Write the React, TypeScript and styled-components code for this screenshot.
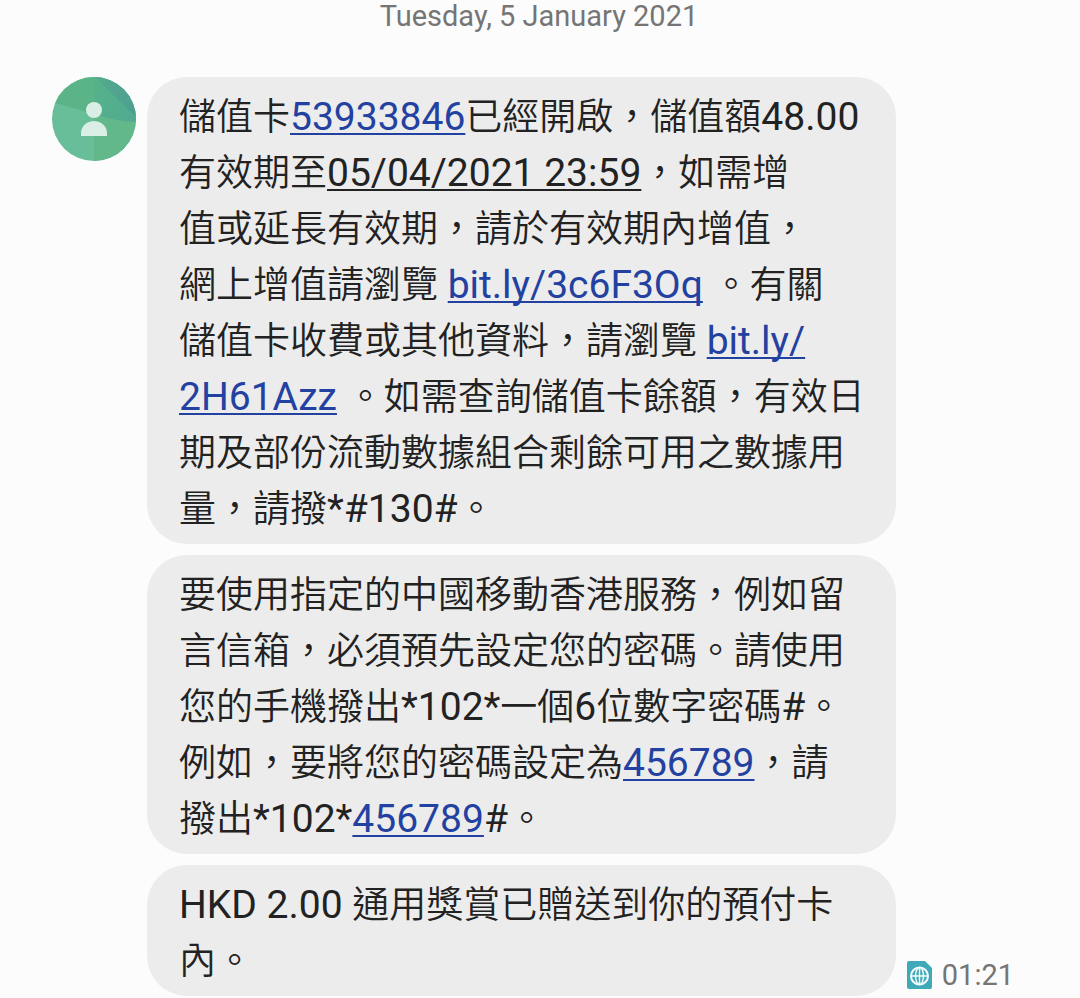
import React from "react";
import styled, { createGlobalStyle } from "styled-components";

const GlobalStyle = createGlobalStyle`
  * { box-sizing: border-box; }
  body {
    margin: 0;
    background: #fcfcfc;
    font-family: Roboto, "Noto Sans CJK TC", sans-serif;
  }
`;

const Page = styled.main`
  padding-bottom: 2px;
`;

const DateHeading = styled.h1`
  margin: 0 0 45px;
  padding-right: 2px;
  color: #757575;
  font-size: 29px;
  font-weight: 400;
  line-height: 32px;
  text-align: center;
`;

const Thread = styled.section`
  display: flex;
  gap: 11px;
  padding: 0 66px 0 52px;
`;

const Avatar = styled.svg`
  flex: none;
  width: 84px;
  height: 84px;
  border-radius: 50%;
`;

const Messages = styled.div`
  display: flex;
  flex: 1;
  flex-direction: column;
  gap: 11px;
  min-width: 0;
`;

const Bubble = styled.p`
  margin: 0;
  padding: 13px 0 6px 32px;
  border-radius: 40px;
  background: #ececec;
  color: #222;
  font-size: 37px;
  font-weight: 350;
  line-height: 56px;
`;

const Latin = styled.span<{ $underlined?: boolean }>`
  font-size: 39px;
  font-weight: 400;
  line-height: 1;
  text-decoration: ${(p) => (p.$underlined ? "underline 2px" : "none")};
  text-decoration-skip-ink: none;
  text-underline-offset: 3px;
`;

const TextLink = styled.a`
  color: #2341a0;
  font-size: 39px;
  font-weight: 400;
  line-height: 1;
  text-decoration: underline 2px;
  text-decoration-skip-ink: none;
  text-underline-offset: 3px;
`;

const Meta = styled.div`
  display: flex;
  flex: none;
  align-items: center;
  align-self: flex-end;
  gap: 10px;
  height: 42px;
`;

const SimIcon = styled.svg`
  width: 25px;
  height: 28px;
`;

const Time = styled.time`
  color: #757575;
  font-size: 29px;
  line-height: 32px;
`;

export default function App() {
  return (
    <Page lang="zh-Hant">
      <GlobalStyle />
      <DateHeading lang="en">Tuesday, 5 January 2021</DateHeading>
      <Thread>
        <Avatar viewBox="0 0 84 84" role="img" aria-label="Contact">
          <defs>
            <linearGradient id="shade" x1="0" y1="0" x2="1" y2="1">
              <stop offset="0" stopColor="#57b389" />
              <stop offset="1" stopColor="#50aa91" />
            </linearGradient>
            <linearGradient id="wedge" x1="0" y1="0" x2="1" y2="1">
              <stop offset="0" stopColor="#55aa8d" />
              <stop offset="1" stopColor="#4d9d92" />
            </linearGradient>
          </defs>
          <rect width="84" height="84" fill="#67be98" />
          <path d="M42 36 84 45V84H42Z" fill="#62b88b" />
          <path d="M0 25 42 37V0H0Z" fill="#5ab488" />
          <path d="M42 0H84V45Q62 44 42 37Z" fill="url(#shade)" />
          <path d="M43 0 84 40V0Z" fill="url(#wedge)" />
          <circle cx="42" cy="33" r="8" fill="#d9eee4" />
          <path d="M29 59V56C29 49 35 44 42 44S55 49 55 56V59Z" fill="#d9eee4" />
        </Avatar>
        <Messages>
          <Bubble>
            儲值卡<TextLink href="tel:53933846">53933846</TextLink>已經開啟，儲值額<Latin>48.00</Latin>
            <br />
            有效期至<Latin $underlined>05/04/2021 23:59</Latin>，如需增
            <br />
            值或延長有效期，請於有效期內增值，
            <br />
            網上增值請瀏覽<Latin> </Latin>
            <TextLink href="https://bit.ly/3c6F3Oq">bit.ly/3c6F3Oq</TextLink>
            <Latin> </Latin>。有關
            <br />
            儲值卡收費或其他資料，請瀏覽<Latin> </Latin>
            <TextLink href="https://bit.ly/2H61Azz">
              bit.ly/
              <br />
              2H61Azz
            </TextLink>
            <Latin> </Latin>。如需查詢儲值卡餘額，有效日
            <br />
            期及部份流動數據組合剩餘可用之數據用
            <br />
            量，請撥<Latin>*#130#</Latin>。
          </Bubble>
          <Bubble>
            要使用指定的中國移動香港服務，例如留
            <br />
            言信箱，必須預先設定您的密碼。請使用
            <br />
            您的手機撥出<Latin>*102*</Latin>一個<Latin>6</Latin>位數字密碼<Latin>#</Latin>。
            <br />
            例如，要將您的密碼設定為<TextLink href="tel:456789">456789</TextLink>，請
            <br />
            撥出<Latin>*102*</Latin>
            <TextLink href="tel:456789">456789</TextLink>
            <Latin>#</Latin>。
          </Bubble>
          <Bubble>
            <Latin>HKD 2.00 </Latin>通用獎賞已贈送到你的預付卡
            <br />
            內。
          </Bubble>
        </Messages>
        <Meta>
          <SimIcon viewBox="0 0 25 28" aria-hidden="true">
            <path d="M2 0H18L25 7V26Q25 28 23 28H2Q0 28 0 26V2Q0 0 2 0Z" fill="#3fa9b8" />
            <g fill="none" stroke="#f4fcfd" strokeWidth="2">
              <circle cx="12.5" cy="15" r="8.5" />
              <ellipse cx="12.5" cy="15" rx="4" ry="8.5" strokeWidth="1.5" />
              <path d="M12.5 6.5V23.5M4 15H21" strokeWidth="1.5" />
            </g>
          </SimIcon>
          <Time>01:21</Time>
        </Meta>
      </Thread>
    </Page>
  );
}
